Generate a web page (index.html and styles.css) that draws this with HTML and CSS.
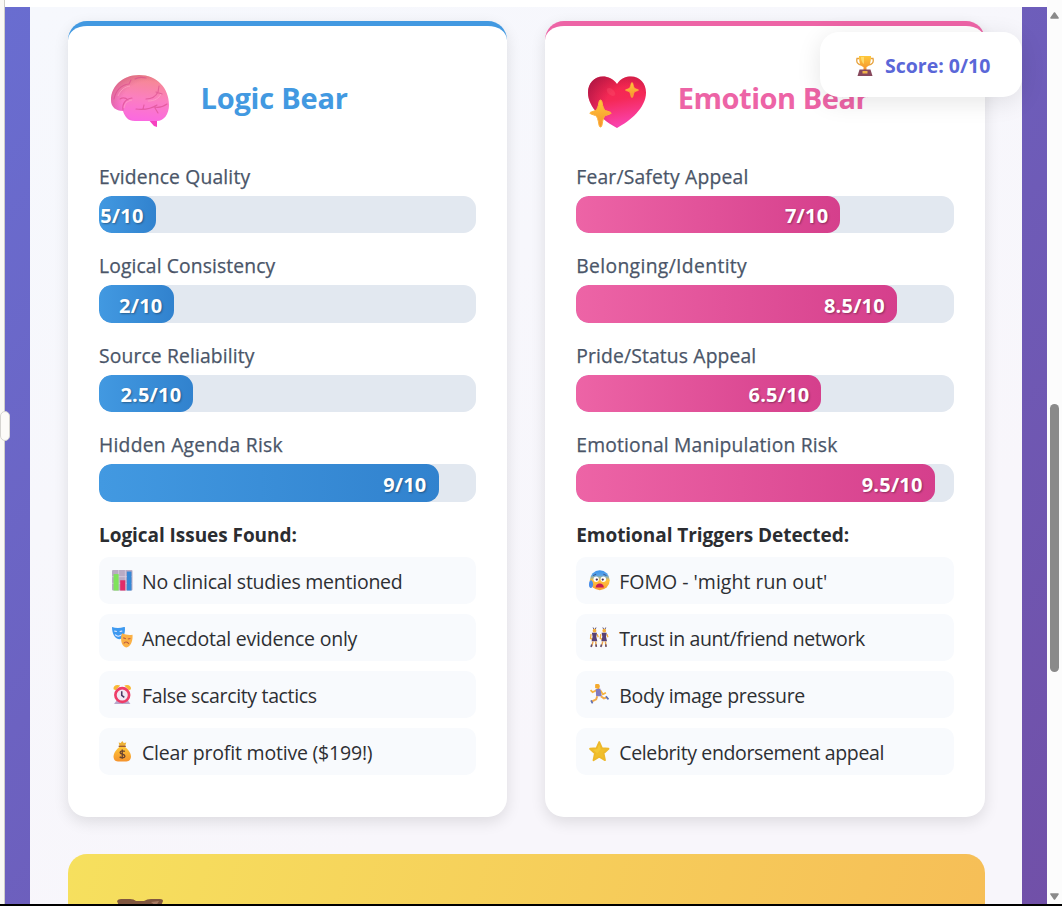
FILE: index.html
```html
<!DOCTYPE html>
<html lang="en">
<head>
<meta charset="utf-8">
<title>Logic Bear and Emotion Bear</title>
<link rel="stylesheet" href="styles.css">
</head>
<body>
<svg class="defs" width="0" height="0" aria-hidden="true">
  <defs>
    <linearGradient id="brainFill" x1=".55" y1="0" x2=".4" y2="1"><stop offset="0" stop-color="#f58a8c"/><stop offset=".5" stop-color="#fb7fc0"/><stop offset="1" stop-color="#fb68e2"/></linearGradient>
    <radialGradient id="brainShade" cx=".65" cy=".6" r=".7"><stop offset=".65" stop-color="#c04a80" stop-opacity="0"/><stop offset="1" stop-color="#c04a70" stop-opacity=".5"/></radialGradient>
    <linearGradient id="heartFill" x1=".4" y1="0" x2=".6" y2="1"><stop offset="0" stop-color="#f42548"/><stop offset=".45" stop-color="#f52958"/><stop offset="1" stop-color="#fb45b8"/></linearGradient>
    <radialGradient id="heartShade" cx=".68" cy=".6" r=".78"><stop offset=".5" stop-color="#a01248" stop-opacity="0"/><stop offset="1" stop-color="#9c1244" stop-opacity=".7"/></radialGradient>
    <linearGradient id="gold" x1="0" y1="0" x2="0" y2="1"><stop offset="0" stop-color="#ffc83a"/><stop offset="1" stop-color="#f5932d"/></linearGradient>
    <linearGradient id="face" x1="0" y1="0" x2="0" y2="1"><stop offset="0" stop-color="#3c94ee"/><stop offset=".25" stop-color="#5aa4e6"/><stop offset=".5" stop-color="#ffc43e"/><stop offset="1" stop-color="#fa9a32"/></linearGradient>
  </defs>
</svg>
<div class="window">
  <div class="panel-edge"></div>
  <div class="page">
    <div class="topline"></div>
    <main class="backdrop">
      <div class="container">
        <div class="cards">
          <section class="card logic">
            <header class="card-header">
              <svg class="avatar" viewBox="0 0 60 60">
                <path d="M38 46h9v9l-3-1-7-8z" fill="#f641c0"/>
                <path d="M1 28C1 14 13 3 29 3c18 0 30 13 30 30 0 9-5 16-12 16H25c-7 0-10-4-12-10C6 39 1 35 1 28z" fill="url(#brainFill)"/>
                <path d="M1 28C1 14 13 3 29 3c18 0 30 13 30 30 0 9-5 16-12 16H25c-7 0-10-4-12-10C6 39 1 35 1 28z" fill="url(#brainShade)"/>
                <g fill="none" stroke="#d84d8c" stroke-width="1.100" stroke-linecap="round" opacity=".65">
                  <path d="M4 27c2-9 7-14 15-15l2-4M25 7c3-2 7-2 11-1M13 38c-1-6 2-11 9-12M10 27c3-2 6-1 8 1M36 27c6 0 10-3 12-7l1-6M46 20l6 2M26 37c8 1 15 0 21-4M44 35c5 1 9 0 13-3M45 36l3 5M33 37l1-4"/>
                </g>
                <path d="M8 24c3-7 7-9 12-10M14 36c1-5 3-7 8-8M38 29c7 0 11-3 13-7" fill="none" stroke="#ffa4c8" stroke-width="1" opacity=".7"/>
              </svg>
              <h2 class="card-title">Logic Bear</h2>
            </header>
            <div class="metric"><div class="label l1">Evidence Quality</div><div class="bar"><div class="fill" style="width:15%">5/10</div></div></div>
            <div class="metric"><div class="label l2">Logical Consistency</div><div class="bar"><div class="fill" style="width:20%">2/10</div></div></div>
            <div class="metric"><div class="label l3">Source Reliability</div><div class="bar"><div class="fill" style="width:25%">2.5/10</div></div></div>
            <div class="metric"><div class="label l4">Hidden Agenda Risk</div><div class="bar"><div class="fill" style="width:90%">9/10</div></div></div>
            <h4 class="subhead">Logical Issues Found:</h4>
            <ul class="findings">
              <li><svg class="icon" viewBox="0 0 20 20"><rect width="20" height="20" rx="1" fill="#b9abc4"/><path d="M0 6.500h20M0 13h20M6.500 0v20M13 0v20" stroke="#d8cfe0" stroke-width=".8"/><path d="M1.500 4h5v16h-5z" fill="#7fe35c"/><path d="M8 10h5v10H8z" fill="#e02c68"/><path d="M14.500 1.500h4.500V20h-4.500z" fill="#3688d6"/></svg><span class="f1">No clinical studies mentioned</span></li>
              <li><svg class="icon" viewBox="0 0 20 20"><path d="M0 0c4 1.500 8 1.500 12.500-.3.800 6-1.200 12-5.500 12.300C2.500 11.500 0 6 0 0z" fill="#3f9af0"/><path d="M2.200 4l2.500.5M7.500 4.500L10 4M3 7.500c2 2 4 2 6.500 0" stroke="#eef" fill="none"/><path d="M10 6c3 1.500 6 2 10 1.500.5 6-1.500 11.500-6 12.500C9.500 19 8.500 14 9 9z" fill="#fbb146"/><path d="M11 10.500l2.500 1M15.500 11.700l2.500-.5M11.500 16c1-2 3.500-2 5 .5" stroke="#b95a42" fill="none"/></svg><span class="f2">Anecdotal evidence only</span></li>
              <li><svg class="icon" viewBox="0 0 20 20"><path d="M1.500 5C1 2 4 0 8 1.500L3.500 6zM18.500 5C19 2 16 0 12 1.500L16.500 6z" fill="#f8b835"/><path d="M2 19.500L4.500 16h11l2.500 3.500z" fill="#b8a7cc"/><circle cx="10" cy="10.800" r="6.700" fill="#f1e8f3" stroke="#ee3d68" stroke-width="2.600"/><path d="M9.500 7v4l2.500 2" fill="none" stroke="#493a64" stroke-width="1.500"/></svg><span class="f3">False scarcity tactics</span></li>
              <li><svg class="icon" viewBox="0 0 20 20"><path d="M6.500 1.500l2 .5L10 0l1.500 2 2.500-.5-1.500 4h-5z" fill="#edb136"/><path d="M7.500 5.500h5c3 2.500 6 6 6 9.500 0 3.500-2.500 5-5.500 5H7c-3.500 0-5.500-1.500-5.500-5 0-3.500 3-7 6-9.500z" fill="url(#gold)"/><path d="M6.500 5.200h7" stroke="#9c5a35" stroke-width="1.300"/><path d="M12.500 10.300c-1-1-4.600-1-4.600.9 0 2.400 4.700 1 4.700 3.600 0 2-3.900 2-5.100.6M10 8.300v9" fill="none" stroke="#6b4430" stroke-width="1.300"/></svg><span class="f4">Clear profit motive ($199!)</span></li>
            </ul>
          </section>
          <section class="card emotion">
            <header class="card-header">
              <svg class="avatar" viewBox="0 0 60 60">
                <path d="M30 12C34 6 39 4.500 44 4.500c9 0 15 7 15 16C59 36 43 49 30 56 17 49 1 36 1 20.500c0-9 6-16 15-16 5 0 10 2 14 7.500z" fill="url(#heartFill)"/>
                <path d="M30 12C34 6 39 4.500 44 4.500c9 0 15 7 15 16C59 36 43 49 30 56 17 49 1 36 1 20.500c0-9 6-16 15-16 5 0 10 2 14 7.500z" fill="url(#heartShade)"/>
                <ellipse cx="24" cy="20" rx="5" ry="3" fill="#ff6476" opacity=".25" transform="rotate(40 24 20)"/>
                <path d="M13.500 28q1.200 0 1.500 2 1.200 7.500 3.500 8.500l5 1.800q1.500.7 0 1.500l-5 1.800q-2.300 1-3.500 9.400-.3 2-1.500 2t-1.500-2Q10.800 44.600 8.500 43.600l-5-1.800q-1.500-.8 0-1.500l5-1.800Q10.800 37.500 12 30q.3-2 1.500-2z" fill="url(#gold)" stroke="#fdb43a" stroke-width="1"/>
                <path d="M45 10.500q.8 0 1 1.500.7 4 2 4.600l3 1q1.200.5 0 1l-3 1q-1.300.6-2 4.700-.2 1.200-1 1.200t-1-1.200q-.7-4.100-2-4.700l-3-1q-1.200-.5 0-1l3-1q1.300-.6 2-4.600.2-1.500 1-1.500z" fill="url(#gold)" stroke="#fdb43a" stroke-width=".6"/>
              </svg>
              <h2 class="card-title">Emotion Bear</h2>
            </header>
            <div class="metric"><div class="label r1">Fear/Safety Appeal</div><div class="bar"><div class="fill" style="width:70%">7/10</div></div></div>
            <div class="metric"><div class="label r2">Belonging/Identity</div><div class="bar"><div class="fill" style="width:85%">8.5/10</div></div></div>
            <div class="metric"><div class="label r3">Pride/Status Appeal</div><div class="bar"><div class="fill" style="width:65%">6.5/10</div></div></div>
            <div class="metric"><div class="label r4">Emotional Manipulation Risk</div><div class="bar"><div class="fill" style="width:95%">9.5/10</div></div></div>
            <h4 class="subhead">Emotional Triggers Detected:</h4>
            <ul class="findings">
              <li><svg class="icon" viewBox="0 0 20 20"><circle cx="10.500" cy="10" r="9.700" fill="url(#face)"/><path d="M0 14c0-3 1-4 2-4s2 2 2 4-1 4-2.500 3.500S0 16 0 14z" fill="#4b8ee8"/><circle cx="7" cy="9" r="2.600" fill="#fff"/><circle cx="14" cy="9" r="2.600" fill="#fff"/><circle cx="7.600" cy="9.300" r="1.100" fill="#453050"/><circle cx="13.400" cy="9.300" r="1.100" fill="#453050"/><path d="M6.500 17c0-5 8-5 8 0z" fill="#c51c5a"/><path d="M4 5.500l3-1.500M14 4l3 1.500" stroke="#38548e" fill="none"/></svg><span class="g1">FOMO - 'might run out'</span></li>
              <li><svg class="icon" viewBox="0 0 20 20"><g id="dancer"><path d="M4 .5l1 2M6.800.5l-.8 2" stroke="#59476a" stroke-width=".9"/><circle cx="5.400" cy="3.600" r="1.800" fill="#f4ae3b"/><path d="M2 7L1.500 11l2 1M8 7l1 3" stroke="#f4ae3b" stroke-width="1.300" fill="none"/><path d="M2.800 5.500h5l-.7 4 1 4.500H2.500l1-4.500z" fill="#574174"/><path d="M4 14l-1.500 5M6.500 14l.5 5" stroke="#e7a04a" stroke-width="1.400"/><path d="M2.700 17l-.7 2.500M6.800 17l.4 2.500" stroke="#604b70" stroke-width="1.500"/></g><use href="#dancer" x="9.500"/></svg><span class="g2">Trust in aunt/friend network</span></li>
              <li><svg class="icon" viewBox="0 0 20 20"><path d="M6 .5c2-1.500 5-.5 4.500 2.500L9.500 5 6 4z" fill="#f5aa2d"/><path d="M7.500 6l-4 2L1.500 6M11 6l2.500 4 3-1.500" fill="none" stroke="#f6b33f" stroke-width="1.700"/><path d="M6.500 5l4.500-.5 1.500 7.500H7z" fill="#827bbf"/><path d="M8 12l-1 3-5 2.500M11.500 12l3 2 3-1" fill="none" stroke="#f1a94a" stroke-width="1.900"/><path d="M2 16l1.500 3M16.500 12l2.500 3" stroke="#5e71b8" stroke-width="1.600"/></svg><span class="g3">Body image pressure</span></li>
              <li><svg class="icon" viewBox="0 0 20 20"><path d="M10 1l2.600 6 6.400.6-4.800 4.400 1.400 6.700L10 15.300l-5.600 3.400L5.800 12 1 7.600 7.400 7z" fill="#f0bf2c" stroke="#edb82b" stroke-width="1.800" stroke-linejoin="round"/><path d="M10 3l1.500 5L8 12 4 8.500l4-.8z" fill="#f9d94b" opacity=".35"/></svg><span class="g4">Celebrity endorsement appeal</span></li>
            </ul>
          </section>
        </div>
        <section class="verdict">
          <svg class="bear" viewBox="0 0 46 12"><path d="M0 2Q1 0 4 0h9q4 0 6 2h8q3-2 7-2h9q3 0 3 2l-4 10H4z" fill="#80563f"/><path d="M34 3l8-1-3 5z" fill="#a97b62"/></svg>
        </section>
      </div>
    </main>
  </div>
  <div class="scrollbar">
    <svg class="arrow up" viewBox="0 0 9 7"><path d="M4.500 1L8 6H1z"/></svg>
    <div class="thumb"></div>
    <svg class="arrow down" viewBox="0 0 9 7"><path d="M1 1h7L4.500 6z"/></svg>
  </div>
  <div class="grip"></div>
  <div class="score">
    <svg class="trophy" viewBox="0 0 18 20"><path d="M3 2.500H1c-1 4 1 6 4.500 6.500M15 2.500h2c1 4-1 6-4.500 6.500" fill="none" stroke="#e7a33f" stroke-width="1.300"/><path d="M3 0h12c0 6-1 10-4.500 11v3h-3v-3C4 10 3 6 3 0z" fill="url(#gold)"/><path d="M5 1h3v7C6 7 5 4 5 1z" fill="#ffe278" opacity=".8"/><path d="M3.500 13.500h11l2 6.500h-15z" fill="#87485c"/><path d="M6.500 15h5v2.500h-5z" fill="#efb34a"/></svg>
    <span>Score: 0/10</span>
  </div>
</div>
</body>
</html>
```
FILE: styles.css
```css
* { box-sizing: border-box; }
body { margin: 0; background: #fff; font-family: "Open Sans", "Noto Sans", sans-serif; font-size: 19.5px; line-height: 28px; color: #2d2f33; }
.defs { position: absolute; }
.window { position: relative; display: flex; width: 1062px; height: 906px; overflow: hidden; border-bottom: 2px solid #000; }
.panel-edge { width: 5px; flex: none; background: #faf9f5; border-right: 1px solid #cfcec9; }
.page { flex: 1; display: flex; flex-direction: column; min-width: 0; }
.topline { height: 7px; flex: none; background: #fff; }
.backdrop { flex: 1; padding: 0 25px; background: linear-gradient(135deg, #696dd0, #7150a8); overflow: hidden; }
.container { height: 920px; padding: 14px 37.500px 0 38px; background: linear-gradient(150deg, #f6f8fd, #f8f6fb 70%); }
.cards { display: grid; grid-template-columns: 1fr 1fr; gap: 38px; }
.card { height: 796px; padding: 31px; border-top: 5px solid; border-radius: 19px; background: #fff; box-shadow: 0 5px 15px rgba(0, 0, 0, .11); }
.logic { border-color: #4299e1; }
.emotion { border-color: #ed64a6; }
.card-header { display: flex; align-items: center; height: 84px; margin-bottom: 21.800px; padding-left: 11px; gap: 30.500px; }
.avatar { width: 60px; height: 60px; margin-top: 6px; }
.card-title { margin: -2px 0 0; font-size: 29px; font-weight: 700; line-height: 40px; white-space: nowrap; }
.logic .card-title { color: #4299e1; letter-spacing: -.2px; }
.emotion .card-title { color: #ed64a6; letter-spacing: -.45px; }
.metric { margin-bottom: 19px; }
.label { font-size: 19.300px; color: #4a5568; white-space: nowrap; -webkit-text-stroke: .25px #4a5568; }
.l1 { letter-spacing: .17px; }
.l2 { letter-spacing: .12px; }
.l3 { letter-spacing: .14px; }
.l4 { letter-spacing: .26px; }
.r1 { letter-spacing: .19px; }
.r2 { letter-spacing: .36px; }
.r3 { letter-spacing: .15px; }
.r4 { letter-spacing: .19px; }
.bar { height: 37.500px; margin-top: 5px; border-radius: 12.500px; background: #e2e8f0; overflow: hidden; }
.fill { display: flex; justify-content: flex-end; align-items: center; height: 100%; padding: 3px 12px 0 0; border-radius: 12.500px; color: #fff; font-size: 20px; letter-spacing: .2px; font-weight: 700; text-shadow: 1px 1px 2px rgba(0, 0, 0, .35); }
.logic .fill { background: linear-gradient(90deg, #4299e1, #3182ce); }
.emotion .fill { background: linear-gradient(90deg, #ed64a6, #d53f8c); }
.subhead { margin: 0 0 8.200px; font-size: 19px; letter-spacing: -.05px; font-weight: 700; color: #2b2d31; white-space: nowrap; }
.findings { display: flex; flex-direction: column; gap: 10px; margin: 0; padding: 0; list-style: none; }
.findings li { display: flex; align-items: center; gap: 9.500px; height: 47px; padding: 0 13px; border-radius: 10px; background: #f8fafd; white-space: nowrap; }
.findings span { margin-top: 4px; }
.f1 { letter-spacing: -.24px; }
.f2 { letter-spacing: -.22px; }
.f3 { letter-spacing: -.34px; }
.f4 { letter-spacing: -.2px; }
.g2 { letter-spacing: -.41px; }
.g3 { letter-spacing: -.32px; }
.g4 { letter-spacing: -.36px; }
.icon { width: 20.500px; height: 20.500px; flex: none; }
.verdict { height: 100px; margin-top: 37px; padding: 45px 49px; border-radius: 19px; background: linear-gradient(105deg, #f6e05e, #f6be57); }
.bear { display: block; width: 46px; height: 12px; }
.scrollbar { display: flex; flex-direction: column; align-items: center; width: 15px; flex: none; padding: 12px 0 4px; background: #fcfcfc; }
.arrow { width: 9px; height: 7px; fill: #8a8a8a; stroke: #8a8a8a; stroke-width: 1.600; stroke-linejoin: round; flex: none; }
.thumb { width: 9px; height: 268px; margin: 385px 0 auto; border-radius: 5px; background: #8a8a8a; }
.grip { position: absolute; left: 0; top: 411px; width: 10px; height: 30px; border: 1px solid #d5d4d0; border-radius: 5px; background: #fcfbf8; }
.score { position: absolute; left: 820px; top: 32px; display: flex; align-items: center; gap: 11px; width: 202px; height: 65px; padding: 2px 0 0 36px; border-radius: 19px; background: #fff; box-shadow: 0 5px 25px rgba(0, 0, 0, .1); color: #5a67d8; font-size: 19.500px; font-weight: 700; white-space: nowrap; }
.trophy { width: 18px; height: 20px; }
```
